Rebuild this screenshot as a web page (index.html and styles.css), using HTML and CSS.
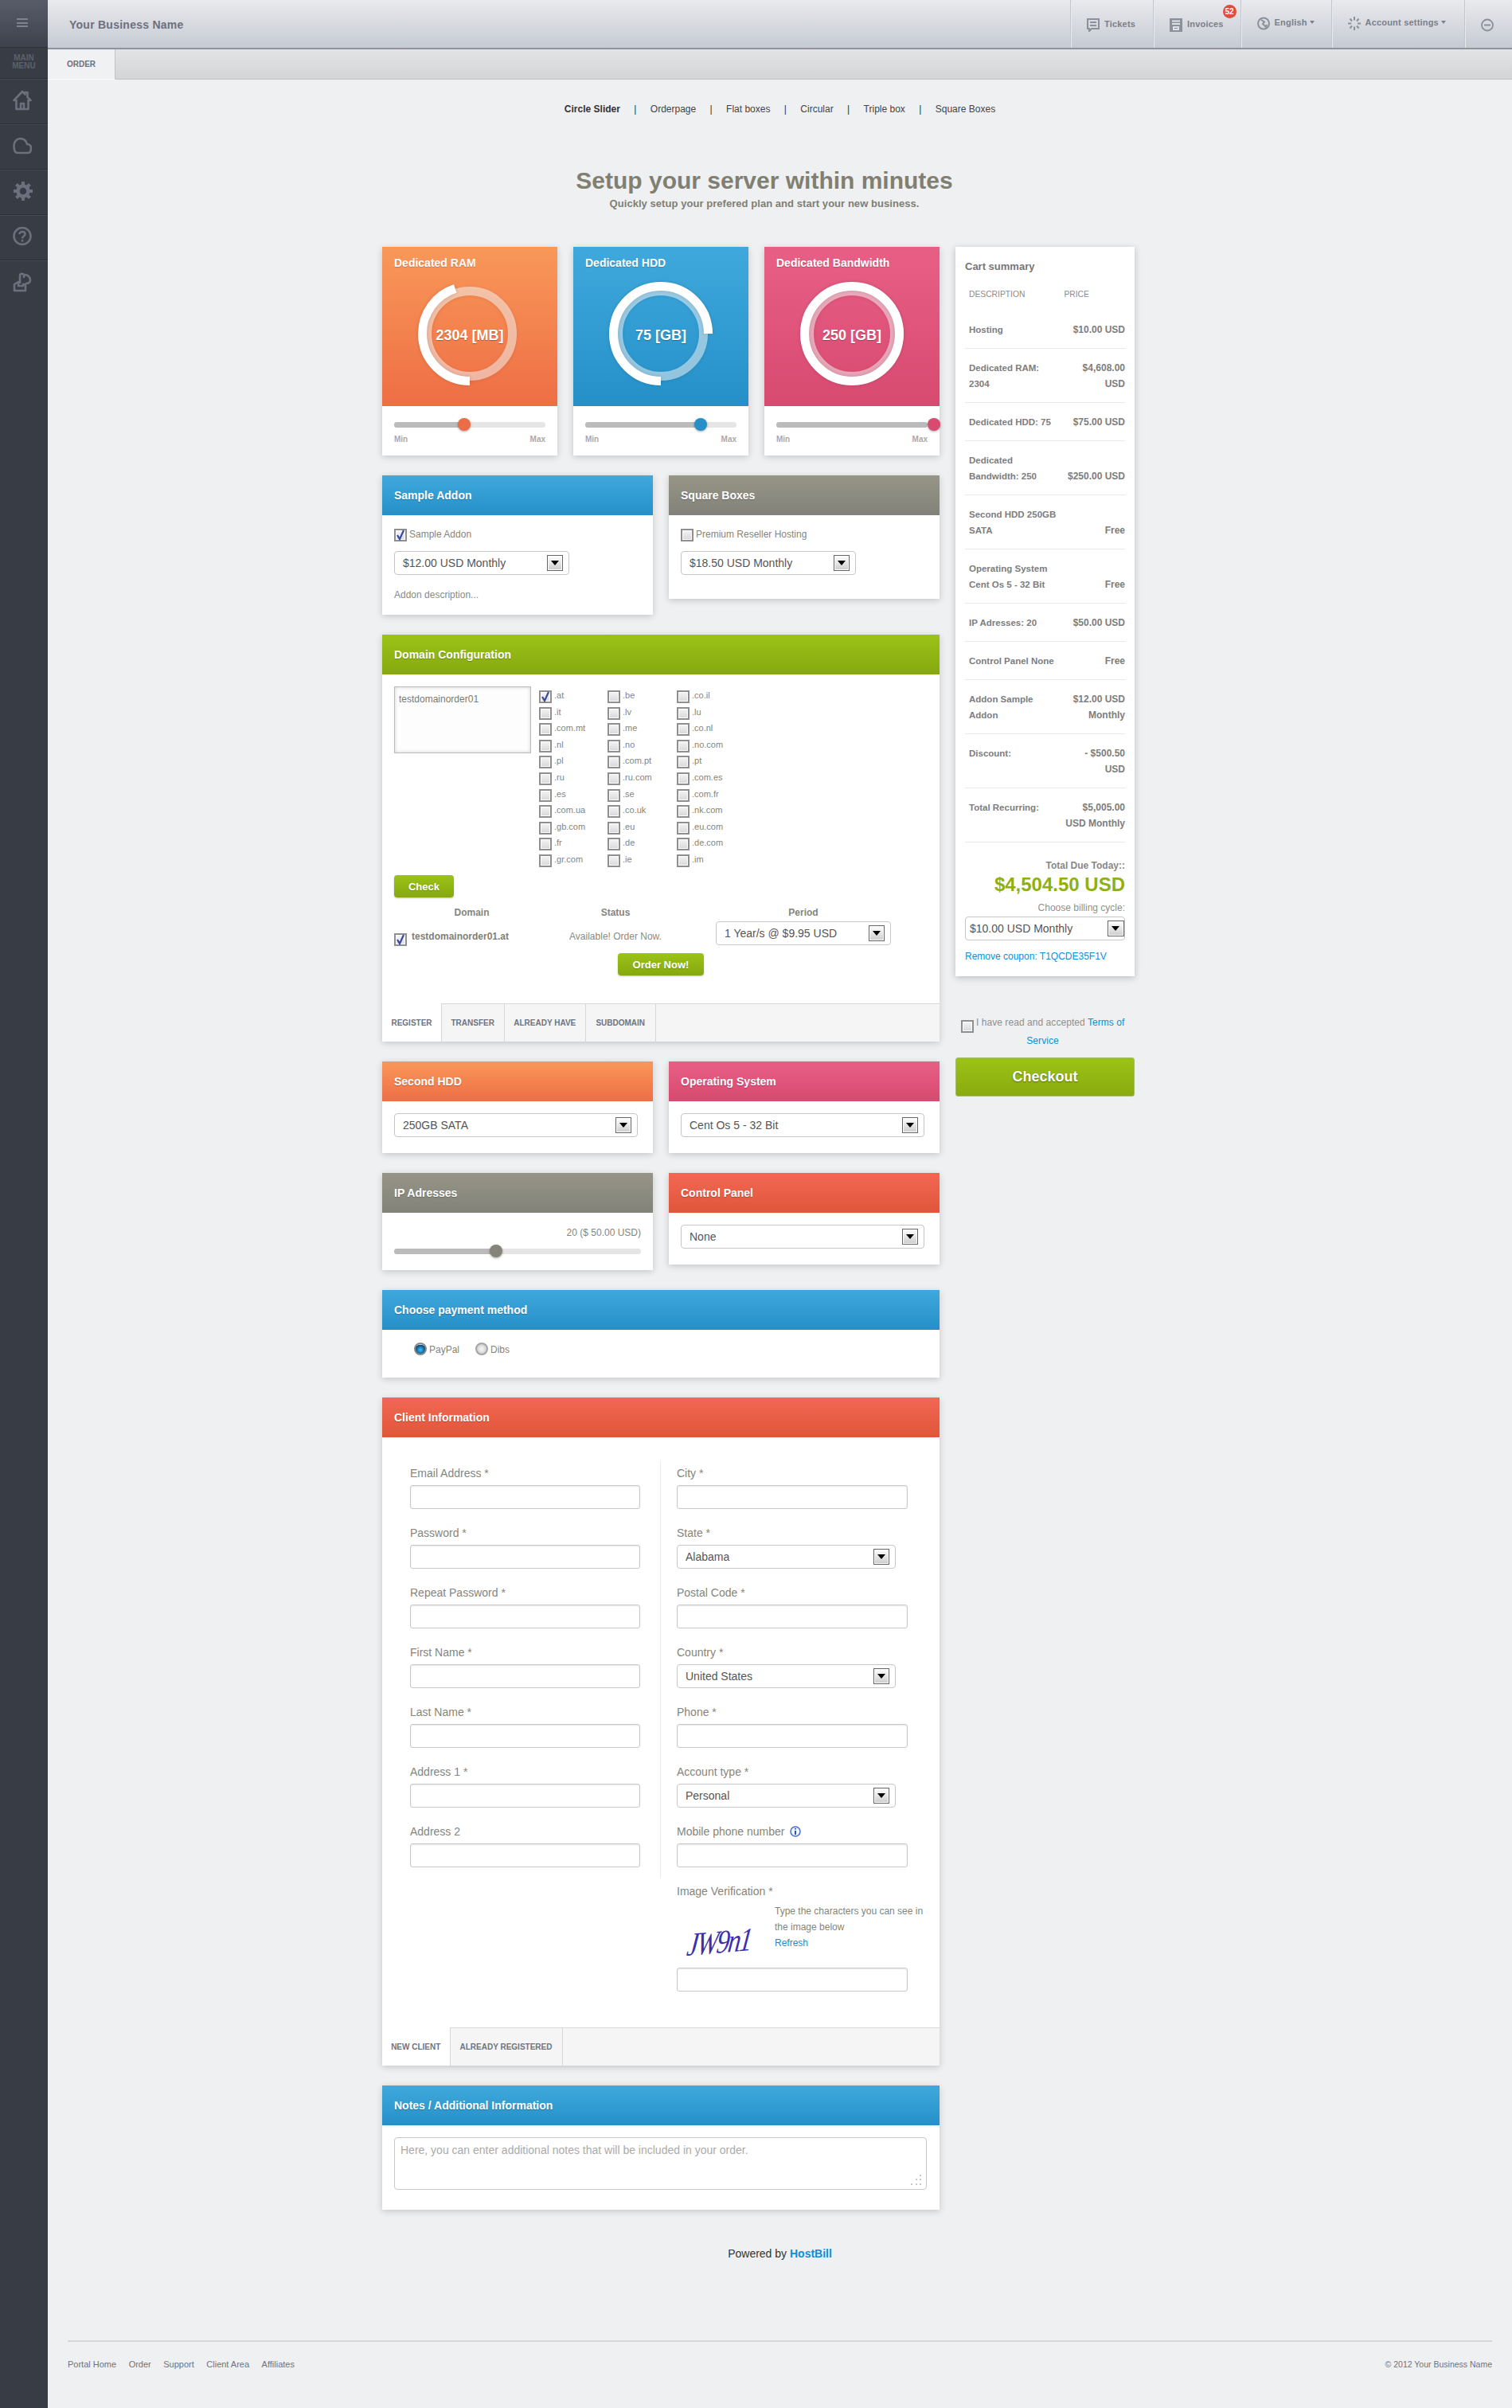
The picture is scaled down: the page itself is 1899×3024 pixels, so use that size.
FILE: index.html
```html
<!DOCTYPE html>
<html lang="en">
<head>
<meta charset="utf-8">
<title>Order</title>
<link rel="stylesheet" href="styles.css">
</head>
<body>
<div class="app">
  <aside class="sidebar">
    <div class="side-top"><span class="burger"></span></div>
    <div class="side-label">MAIN<br>MENU</div>
    <div class="side-item"><svg width="24" height="26" viewBox="0 0 24 26" class="side-icon"><path d="M1.500 13 L12 2 L15.500 5.500 V3 H18.500 V9 L22.500 13 L19.500 13 V24 H4.500 V13 Z M10 24 V17 H14 V24" fill="none" stroke="#6c707c" stroke-width="2.600" stroke-linejoin="round"/></svg></div>
    <div class="side-item"><svg width="24" height="22" viewBox="0 0 24 22" class="side-icon"><path d="M6 20 H19 C22 20 23 17 23 14 C23 11 21 9 18 9 C17 5 14 2 9.500 2 C5 2 1.500 6 1.500 11 C1.500 16 3 20 6 20 Z" fill="none" stroke="#6c707c" stroke-width="2.600"/></svg></div>
    <div class="side-item"><svg width="26" height="26" viewBox="0 0 26 26" class="side-icon"><circle cx="13" cy="13" r="6.500" fill="none" stroke="#6c707c" stroke-width="4.500"/><path d="M13 1 V6 M13 20 V25 M1 13 H6 M20 13 H25 M4.500 4.500 L8 8 M18 18 L21.500 21.500 M21.500 4.500 L18 8 M8 18 L4.500 21.500" stroke="#6c707c" stroke-width="4"/></svg></div>
    <div class="side-item"><svg width="24" height="26" viewBox="0 0 24 26" class="side-icon"><circle cx="12" cy="12.500" r="10.500" fill="none" stroke="#6c707c" stroke-width="2.600"/><path d="M8.500 10 C8.500 6 15.500 6 15.500 10 C15.500 12.500 12 12.500 12 15.500 M12 17 V19.500" fill="none" stroke="#6c707c" stroke-width="2.600"/></svg></div>
    <div class="side-item"><svg width="24" height="26" viewBox="0 0 24 26" class="side-icon"><path d="M9 15 V5 C9 2 14 2 14 5 V8 M15 4 C19 4 22 7 22 11 C22 14 19 15 16 15 M2 24 V16 L7 13 V18 H13 V16 H16 V24 Z" fill="none" stroke="#6c707c" stroke-width="2.600" stroke-linejoin="round"/></svg></div>
  </aside>

  <div class="main">
    <header class="topbar">
      <div class="brand">Your Business Name</div>
      <div class="top-items">
        <div class="top-item w-tickets">
          <svg width="16" height="17" viewBox="0 0 16 17"><path d="M1 1 H15 V13 H6 L3 16 V13 H1 Z M4 5 H12 M4 9 H12" fill="none" stroke="#8b909b" stroke-width="2"/></svg>
          <span>Tickets</span>
        </div>
        <div class="top-item w-invoices">
          <svg width="16" height="17" viewBox="0 0 16 17"><path d="M0 0 H16 V17 H0 Z" fill="#8b909b"/><path d="M3 3.500 H13 M3 7 H13 M5 11 H11 V14 H5 Z" stroke="#dfe1e6" stroke-width="2" fill="none"/></svg>
          <span>Invoices</span>
          <b class="badge">52</b>
        </div>
        <div class="top-item raised w-lang">
          <svg width="16" height="17" viewBox="0 0 16 17"><circle cx="8" cy="8.500" r="7" fill="none" stroke="#8b909b" stroke-width="2"/><path d="M5 4 L9 6.500 L7 9 L11 13 L12 10" fill="none" stroke="#8b909b" stroke-width="2"/></svg>
          <span>English</span><i class="caret"></i>
        </div>
        <div class="top-item raised w-account">
          <svg width="16" height="17" viewBox="0 0 16 17"><path d="M8 0 V4.500 M8 12.500 V17 M0 8.500 H4 M12 8.500 H16 M2.500 2.500 L5 5.500 M13.500 14.500 L11 11.500 M13.500 2.500 L11 5.500 M2.500 14.500 L5 11.500" stroke="#8b909b" stroke-width="2"/></svg>
          <span>Account settings</span><i class="caret"></i>
        </div>
        <div class="top-item w-exit">
          <svg width="16" height="17" viewBox="0 0 16 17"><circle cx="8" cy="8.500" r="7" fill="none" stroke="#8b909b" stroke-width="1.800"/><path d="M4 8.500 H12" stroke="#8b909b" stroke-width="2"/></svg>
        </div>
      </div>
    </header>
    <div class="tabbar"><div class="tabbar-active">ORDER</div></div>

    <nav class="subnav">
      <b>Circle Slider</b><span class="sep">|</span><span>Orderpage</span><span class="sep">|</span><span>Flat boxes</span><span class="sep">|</span><span>Circular</span><span class="sep">|</span><span>Triple box</span><span class="sep">|</span><span>Square Boxes</span>
    </nav>

    <div class="container">
      <h1 class="page-title">Setup your server within minutes</h1>
      <p class="page-sub">Quickly setup your prefered plan and start your new business.</p>

      <div class="layout">
        <div class="col-main">
          <div class="cards">
            <section class="card">
              <div class="card-head orange">
                <h3 class="card-title">Dedicated RAM</h3>
                <div class="ring">
                  <svg width="140" height="140" viewBox="0 0 140 140"><circle class="ring-base" cx="70" cy="70" r="53.500"/><circle class="ring-val" cx="70" cy="70" r="59.500" stroke-dasharray="168 400" transform="rotate(90 70 70)"/></svg>
                  <span class="ring-text">2304 [MB]</span>
                </div>
              </div>
              <div class="card-foot">
                <div class="track"><div class="fill" style="width:44%"></div><span class="thumb t-orange" style="left:80px"></span></div>
                <div class="minmax"><span>Min</span><span>Max</span></div>
              </div>
            </section>
            <section class="card">
              <div class="card-head blue">
                <h3 class="card-title">Dedicated HDD</h3>
                <div class="ring">
                  <svg width="140" height="140" viewBox="0 0 140 140"><circle class="ring-base" cx="70" cy="70" r="53.500"/><circle class="ring-val" cx="70" cy="70" r="59.500" stroke-dasharray="280 400" transform="rotate(90 70 70)"/></svg>
                  <span class="ring-text">75 [GB]</span>
                </div>
              </div>
              <div class="card-foot">
                <div class="track"><div class="fill" style="width:75%"></div><span class="thumb t-blue" style="left:136.500px"></span></div>
                <div class="minmax"><span>Min</span><span>Max</span></div>
              </div>
            </section>
            <section class="card">
              <div class="card-head pink">
                <h3 class="card-title">Dedicated Bandwidth</h3>
                <div class="ring">
                  <svg width="140" height="140" viewBox="0 0 140 140"><circle class="ring-base" cx="70" cy="70" r="53.500"/><circle class="ring-val" cx="70" cy="70" r="59.500" stroke-dasharray="374 400" transform="rotate(90 70 70)"/></svg>
                  <span class="ring-text">250 [GB]</span>
                </div>
              </div>
              <div class="card-foot">
                <div class="track"><div class="fill" style="width:100%"></div><span class="thumb t-pink" style="left:190px"></span></div>
                <div class="minmax"><span>Min</span><span>Max</span></div>
              </div>
            </section>
          </div>

          <div class="two">
            <section class="panel">
              <h3 class="panel-head blue">Sample Addon</h3>
              <div class="panel-body addon">
                <label class="check-line"><span class="cb on"><svg width="14" height="14" viewBox="0 0 14 14"><path d="M3 7 L6 12 L11 1" fill="none" stroke="#3a4a9a" stroke-width="2.200"/></svg></span>Sample Addon</label>
                <div class="select s220"><span>$12.00 USD Monthly</span><i class="arrow"></i></div>
                <p class="addon-desc">Addon description...</p>
              </div>
            </section>
            <section class="panel">
              <h3 class="panel-head grey">Square Boxes</h3>
              <div class="panel-body addon">
                <label class="check-line"><span class="cb"></span>Premium Reseller Hosting</label>
                <div class="select s220"><span>$18.50 USD Monthly</span><i class="arrow"></i></div>
              </div>
            </section>
          </div>

          <section class="panel">
            <h3 class="panel-head green">Domain Configuration</h3>
            <div class="domain-body">
              <div class="domain-top">
                <div class="domain-input">testdomainorder01</div>
                <div class="tlds">
                  <label class="tld"><span class="cb on"><svg width="14" height="14" viewBox="0 0 14 14"><path d="M3 7 L6 12 L11 1" fill="none" stroke="#3a4a9a" stroke-width="2.200"/></svg></span>.at</label>
                  <label class="tld"><span class="cb"></span>.be</label><label class="tld"><span class="cb"></span>.co.il</label>
                  <label class="tld"><span class="cb"></span>.it</label><label class="tld"><span class="cb"></span>.lv</label><label class="tld"><span class="cb"></span>.lu</label>
                  <label class="tld"><span class="cb"></span>.com.mt</label><label class="tld"><span class="cb"></span>.me</label><label class="tld"><span class="cb"></span>.co.nl</label>
                  <label class="tld"><span class="cb"></span>.nl</label><label class="tld"><span class="cb"></span>.no</label><label class="tld"><span class="cb"></span>.no.com</label>
                  <label class="tld"><span class="cb"></span>.pl</label><label class="tld"><span class="cb"></span>.com.pt</label><label class="tld"><span class="cb"></span>.pt</label>
                  <label class="tld"><span class="cb"></span>.ru</label><label class="tld"><span class="cb"></span>.ru.com</label><label class="tld"><span class="cb"></span>.com.es</label>
                  <label class="tld"><span class="cb"></span>.es</label><label class="tld"><span class="cb"></span>.se</label><label class="tld"><span class="cb"></span>.com.fr</label>
                  <label class="tld"><span class="cb"></span>.com.ua</label><label class="tld"><span class="cb"></span>.co.uk</label><label class="tld"><span class="cb"></span>.nk.com</label>
                  <label class="tld"><span class="cb"></span>.gb.com</label><label class="tld"><span class="cb"></span>.eu</label><label class="tld"><span class="cb"></span>.eu.com</label>
                  <label class="tld"><span class="cb"></span>.fr</label><label class="tld"><span class="cb"></span>.de</label><label class="tld"><span class="cb"></span>.de.com</label>
                  <label class="tld"><span class="cb"></span>.gr.com</label><label class="tld"><span class="cb"></span>.ie</label><label class="tld"><span class="cb"></span>.im</label>
                </div>
              </div>
              <button class="btn btn-check" type="button">Check</button>
              <div class="result-grid">
                <div class="rh">Domain</div><div class="rh">Status</div><div class="rh">Period</div>
                <div class="rc-name"><span class="cb on"><svg width="14" height="14" viewBox="0 0 14 14"><path d="M3 7 L6 12 L11 1" fill="none" stroke="#3a4a9a" stroke-width="2.200"/></svg></span><b>testdomainorder01.at</b></div>
                <div class="rc-status">Available! Order Now.</div>
                <div class="rc-select"><div class="select s220"><span>1 Year/s @ $9.95 USD</span><i class="arrow"></i></div></div>
              </div>
              <div class="order-now"><button class="btn btn-order" type="button">Order Now!</button></div>
            </div>
            <div class="tabs">
              <div class="tab active w75">REGISTER</div><div class="tab w78">TRANSFER</div><div class="tab w102">ALREADY HAVE</div><div class="tab w87">SUBDOMAIN</div>
            </div>
          </section>

          <div class="two">
            <section class="panel">
              <h3 class="panel-head orange">Second HDD</h3>
              <div class="panel-body opt"><div class="select s306"><span>250GB SATA</span><i class="arrow"></i></div></div>
            </section>
            <section class="panel">
              <h3 class="panel-head pink">Operating System</h3>
              <div class="panel-body opt"><div class="select s306"><span>Cent Os 5 - 32 Bit</span><i class="arrow"></i></div></div>
            </section>
          </div>

          <div class="two">
            <section class="panel">
              <h3 class="panel-head grey">IP Adresses</h3>
              <div class="panel-body ip">
                <div class="ip-val">20 ($ 50.00 USD)</div>
                <div class="track"><div class="fill" style="width:41%"></div><span class="thumb t-grey" style="left:120px"></span></div>
              </div>
            </section>
            <section class="panel">
              <h3 class="panel-head red">Control Panel</h3>
              <div class="panel-body opt"><div class="select s306"><span>None</span><i class="arrow"></i></div></div>
            </section>
          </div>

          <section class="panel">
            <h3 class="panel-head blue">Choose payment method</h3>
            <div class="pay-body">
              <label class="pay"><span class="radio on"></span>PayPal</label>
              <label class="pay"><span class="radio"></span>Dibs</label>
            </div>
          </section>

          <section class="panel">
            <h3 class="panel-head red">Client Information</h3>
            <div class="form-grid">
              <div class="form-left">
                <div class="field"><label>Email Address *</label><input type="text"></div>
                <div class="field"><label>Password *</label><input type="text"></div>
                <div class="field"><label>Repeat Password *</label><input type="text"></div>
                <div class="field"><label>First Name *</label><input type="text"></div>
                <div class="field"><label>Last Name *</label><input type="text"></div>
                <div class="field"><label>Address 1 *</label><input type="text"></div>
                <div class="field"><label>Address 2</label><input type="text"></div>
              </div>
              <div class="form-right">
                <div class="field"><label>City *</label><input type="text"></div>
                <div class="field"><label>State *</label><div class="select s275"><span>Alabama</span><i class="arrow"></i></div></div>
                <div class="field"><label>Postal Code *</label><input type="text"></div>
                <div class="field"><label>Country *</label><div class="select s275"><span>United States</span><i class="arrow"></i></div></div>
                <div class="field"><label>Phone *</label><input type="text"></div>
                <div class="field"><label>Account type *</label><div class="select s275"><span>Personal</span><i class="arrow"></i></div></div>
                <div class="field"><label>Mobile phone number <svg class="info" width="14" height="16" viewBox="0 0 14 16"><circle cx="7" cy="8" r="6" fill="#eef3fc" stroke="#3f6fd8" stroke-width="1.500"/><path d="M7 4 V5.500 M7 7 V12" stroke="#2a52b8" stroke-width="2"/></svg></label><input type="text"></div>
                <div class="field verify">
                  <label>Image Verification *</label>
                  <div class="captcha-row">
                    <div class="captcha"><span>JW9n1</span></div>
                    <div class="captcha-help">Type the characters you can see in<br>the image below<br><a>Refresh</a></div>
                  </div>
                  <input type="text">
                </div>
              </div>
            </div>
            <div class="tabs form-tabs">
              <div class="tab active w85">NEW CLIENT</div><div class="tab w141">ALREADY REGISTERED</div>
            </div>
          </section>

          <section class="panel">
            <h3 class="panel-head blue">Notes / Additional Information</h3>
            <div class="notes-body">
              <div class="notes-wrap">
                <textarea class="notes" placeholder="Here, you can enter additional notes that will be included in your order."></textarea>
                <svg class="grip" width="14" height="14" viewBox="0 0 14 14"><path d="M12 1 h2 v2 h-2 Z M7 6 h2 v2 h-2 Z M12 6 h2 v2 h-2 Z M1 12 h2 v2 h-2 Z M7 12 h2 v2 h-2 Z M12 12 h2 v2 h-2 Z" fill="#c8c8c8"/></svg>
              </div>
            </div>
          </section>
        </div>

        <div class="col-cart">
          <section class="cart">
            <h3 class="cart-title">Cart summary</h3>
            <div class="cart-cols"><span>DESCRIPTION</span><span>PRICE</span></div>
            <div class="row"><span>Hosting</span><span>$10.00 USD</span></div>
            <div class="row"><span>Dedicated RAM:<br>2304</span><span class="r">$4,608.00<br>USD</span></div>
            <div class="row"><span>Dedicated HDD: 75</span><span>$75.00 USD</span></div>
            <div class="row"><span>Dedicated<br>Bandwidth: 250</span><span>$250.00 USD</span></div>
            <div class="row"><span>Second HDD 250GB<br>SATA</span><span>Free</span></div>
            <div class="row"><span>Operating System<br>Cent Os 5 - 32 Bit</span><span>Free</span></div>
            <div class="row"><span>IP Adresses: 20</span><span>$50.00 USD</span></div>
            <div class="row"><span>Control Panel None</span><span>Free</span></div>
            <div class="row"><span>Addon Sample<br>Addon</span><span class="r">$12.00 USD<br>Monthly</span></div>
            <div class="row top"><span>Discount:</span><span class="r">- $500.50<br>USD</span></div>
            <div class="row top"><span>Total Recurring:</span><span class="r">$5,005.00<br>USD Monthly</span></div>
            <div class="due-label">Total Due Today::</div>
            <div class="due">$4,504.50 USD</div>
            <div class="cycle-label">Choose billing cycle:</div>
            <div class="select tight"><span>$10.00 USD Monthly</span><i class="arrow"></i></div>
            <a class="coupon">Remove coupon: T1QCDE35F1V</a>
          </section>
          <p class="terms"><span class="cb"></span> I have read and accepted <a>Terms of<br>Service</a></p>
          <button class="checkout" type="button">Checkout</button>
        </div>
      </div>
    </div>

    <p class="powered">Powered by <a>HostBill</a></p>

    <footer class="footer">
      <div class="foot-links"><span>Portal Home</span><span>Order</span><span>Support</span><span>Client Area</span><span>Affiliates</span></div>
      <div class="foot-copy">© 2012 Your Business Name</div>
    </footer>
  </div>
</div>
</body>
</html>
```

FILE: styles.css
```css
* { box-sizing: border-box; }
html, body { margin: 0; padding: 0; }
body { background: #eff0f2; font-family: "Liberation Sans", Arial, sans-serif; font-size: 12px; color: #7f7f75; }
h1, h3, p { margin: 0; }
a { color: #0a8fd6; }

.app { display: flex; min-height: 100vh; }

/* sidebar */
.sidebar { width: 60px; flex: none; background: #383c45; }
.side-top { height: 60px; background: linear-gradient(#575c69, #3e424c); border-bottom: 1px solid #2f323a; display: flex; justify-content: flex-start; padding: 23px 0 0 21px; }
.burger { display: block; width: 14px; height: 11px; border-top: 2px solid #7e8390; border-bottom: 2px solid #7e8390; position: relative; }
.burger::after { content: ""; position: absolute; left: 0; right: 0; top: 2.500px; height: 2px; background: #7e8390; }
.side-label { height: 38px; padding-top: 8px; text-align: center; font-size: 10px; line-height: 10px; font-weight: bold; color: #5c616d; }
.side-item { height: 57px; border-top: 1px solid #2c2f36; box-shadow: inset 0 1px 0 #454954; display: flex; align-items: center; padding: 0 0 3px 16px; }

/* top bar */
.main { flex: 1; min-width: 0; display: flex; flex-direction: column; }
.topbar { height: 62px; display: flex; justify-content: space-between; background: linear-gradient(#e9eaed, #c6cad3); border-bottom: 2px solid #8f939c; }
.brand { padding: 23px 0 0 27px; font-size: 14px; line-height: 16px; font-weight: bold; color: #6c707d; letter-spacing: .25px; }
.top-items { display: flex; }
.top-item { position: relative; height: 60px; border-left: 1px solid #c3c6cd; box-shadow: inset 1px 0 0 #e8e9ec; display: flex; align-items: flex-start; gap: 6px; padding: 23px 0 0 20px; font-size: 11px; line-height: 14px; font-weight: bold; color: #7a7f8b; }
.top-item span { letter-spacing: .2px; }
.raised { padding-top: 21px; }
.w-tickets { width: 104px; }
.w-invoices { width: 109.500px; }
.w-lang { width: 114px; }
.w-account { width: 167.500px; }
.w-exit { width: 60px; padding-left: 20px; }
.badge { position: absolute; left: 86.500px; top: 6px; width: 17px; height: 17px; border-radius: 50%; background: #e74a3b; color: #fff; font-size: 10px; line-height: 17px; text-align: center; }
.caret { width: 0; height: 0; margin: 5px 0 0 -3px; border: 3.500px solid transparent; border-top: 4px solid #7a7f8b; border-bottom: 0; }

.tabbar { height: 38px; background: linear-gradient(#e3e4e6, #d3d4d6); border-bottom: 1px solid #c2c3c6; }
.tabbar-active { width: 85px; height: 38px; background: #f0f1f3; border-right: 1px solid #c2c3c6; border-bottom: 1px solid #fff; font-size: 10px; line-height: 37px; font-weight: bold; color: #6c707d; text-align: center; }

.subnav { margin-top: 30px; height: 14px; display: flex; justify-content: center; gap: 17.400px; font-size: 12px; line-height: 14px; color: #444; }
.subnav b { color: #333; }
.sep { color: #333; }

.container { margin-left: 420px; width: 960px; }
.page-title { margin-top: 65px; font-size: 30px; line-height: 36px; font-weight: bold; text-align: center; color: #7f7f72; }
.page-sub { margin-top: 3px; font-size: 13px; line-height: 16px; font-weight: bold; letter-spacing: .05px; text-align: center; color: #7f7f72; }

.layout { margin-top: 46px; display: flex; gap: 20px; align-items: flex-start; }
.col-main { width: 700px; display: flex; flex-direction: column; gap: 25px; }
.col-cart { width: 225px; }

/* colour heads */
.orange { background: linear-gradient(#f99859, #ee6e45); }
.blue { background: linear-gradient(#3fa9dd, #2590c8); }
.pink { background: linear-gradient(#e85f86, #d84a70); }
.grey { background: linear-gradient(#969586, #83827a); }
.green { background: linear-gradient(#9bc317, #86a80f); }
.red { background: linear-gradient(#f26753, #e0563a); }

/* slider cards */
.cards { display: flex; gap: 20px; }
.card { width: 220px; height: 262px; background: #fff; box-shadow: 0 2px 8px rgba(0, 0, 0, .18); }
.card-head { height: 200px; padding-top: 12px; }
.card-title { padding-left: 15px; font-size: 14px; line-height: 16px; font-weight: bold; color: #fff; text-shadow: 0 1px 1px rgba(0, 0, 0, .2); }
.ring { position: relative; width: 140px; height: 140px; margin: 11px auto 0; }
.ring svg { display: block; overflow: visible; }
.ring-base { fill: none; stroke: rgba(255, 255, 255, .5); stroke-width: 11; filter: drop-shadow(0 1px 2px rgba(0, 0, 0, .15)); }
.ring-val { fill: none; stroke: #fff; stroke-width: 11; filter: drop-shadow(0 0 2px rgba(0, 0, 0, .15)); }
.ring-text { position: absolute; left: 0; right: 0; top: 61px; text-align: center; font-size: 18px; line-height: 22px; font-weight: bold; color: #fff; text-shadow: 0 1px 1px rgba(0, 0, 0, .3); }
.card-foot { padding: 20px 15px 0; }
.track { position: relative; height: 7px; border-radius: 4px; background: #e5e5e5; }
.fill { height: 7px; border-radius: 4px; background: #bbb; }
.thumb { position: absolute; top: -5px; width: 16px; height: 16px; border-radius: 50%; box-shadow: 0 1px 3px rgba(0, 0, 0, .35); }
.t-orange { background: #ec6d45; }
.t-blue { background: #2590c8; }
.t-pink { background: #d84a70; }
.t-grey { background: #85847a; }
.minmax { margin-top: 9px; display: flex; justify-content: space-between; font-size: 10px; line-height: 12px; font-weight: bold; color: #aaa; }

/* panels */
.two { display: grid; grid-template-columns: 340px 340px; gap: 20px; align-items: start; }
.panel { background: #fff; box-shadow: 0 2px 8px rgba(0, 0, 0, .18); }
.panel-head { height: 50px; padding-left: 15px; font-size: 14px; line-height: 50px; font-weight: bold; color: #fff; text-shadow: 0 1px 1px rgba(0, 0, 0, .25); }
.panel-body { padding: 15px; }
.addon { padding: 17px 15px 30px; }
.addon-desc { margin-top: 17px; margin-bottom: -13px; line-height: 16px; color: #8a8a80; }
.check-line { display: flex; gap: 3px; height: 16px; line-height: 15px; margin-bottom: 12px; color: #85857b; }
.opt { padding: 15px 15px 20px; }
.ip { padding: 17px 15px 20px; }
.ip-val { text-align: right; line-height: 16px; margin-bottom: 12px; color: #85857b; }

/* custom controls */
.cb { flex: none; display: inline-block; width: 16px; height: 16px; border: 2px solid #8f8f8f; outline: 1px solid #fff; outline-offset: -3px; background: linear-gradient(#f4f4f4, #d8d8d8); position: relative; vertical-align: top; }
.cb.on { background: linear-gradient(#f6f6ff, #dcdce8); }
.cb svg { position: absolute; left: -1px; top: -1px; }
.radio { flex: none; display: inline-block; width: 16px; height: 16px; border-radius: 50%; border: 2px solid #a5a5a5; background: radial-gradient(circle, #f0f0f0 20%, #c4c4c4 90%); }
.radio.on { border-color: #888; background: radial-gradient(circle at 50% 60%, #3ab0e6 10%, #0b5f95 55%, #0a3f66 70%, #eee 72%); }
.select { height: 30px; display: flex; align-items: center; justify-content: space-between; padding: 0 7px 0 10px; border: 1px solid #c6c6c6; border-radius: 4px; background: #fff; font-size: 14px; color: #555; }
.s220 { width: 220px; }
.s275 { width: 275px; }
.s306 { width: 306px; }
.arrow { position: relative; flex: none; width: 20px; height: 20px; border: 1px solid #666; box-shadow: inset 0 0 0 1px #fff; background: linear-gradient(#fafafa 10%, #ccc); }
.arrow::after { content: ""; position: absolute; left: 4px; top: 6px; width: 0; height: 0; border: 5px solid transparent; border-top: 6px solid #000; border-bottom: 0; }
.tight { padding: 0 0 0 5px; }
.tight .arrow { width: 21px; }

/* domain */
.domain-body { padding: 15px 15px 0; }
.domain-top { display: flex; gap: 10px; align-items: flex-start; }
.domain-input { width: 172px; height: 84px; padding: 7px 5px; border: 1px solid #bbb; box-shadow: inset 0 0 4px rgba(0, 0, 0, .18); background: #fdfdfd; font-size: 12px; line-height: 16px; color: #7a7a72; }
.tlds { margin-top: 5px; display: grid; grid-template-columns: 86px 87px 100px; grid-auto-rows: 20.600px; }
.tld { display: flex; gap: 3px; font-size: 11px; line-height: 12px; color: #85857b; }
.btn { display: block; border: 0; border-radius: 4px; padding: 0; background: linear-gradient(#9bc317, #86a80f); box-shadow: 0 1px 2px rgba(0, 0, 0, .25); font-family: inherit; font-size: 13px; font-weight: bold; color: #fff; text-shadow: 0 1px 1px rgba(0, 0, 0, .2); }
.btn-check { margin-top: 5.500px; width: 75px; height: 28px; }
.result-grid { margin-top: 12px; display: grid; grid-template-columns: 195px 166px 306px; grid-template-rows: 18px 30px; }
.rh { text-align: center; font-weight: bold; line-height: 14px; color: #85857b; }
.rc-name { display: flex; gap: 6px; padding-top: 11px; line-height: 16px; color: #7f7f75; }
.rc-name .cb { margin-top: 4px; }
.rc-status { padding-top: 11px; text-align: center; line-height: 16px; color: #8a8a80; }
.rc-select { display: flex; justify-content: center; }
.order-now { margin-top: 10px; display: flex; justify-content: center; }
.btn-order { width: 108px; height: 28px; }

.tabs { margin-top: 35px; height: 48px; display: flex; background: #f5f5f5; border-top: 1px solid #d8d8d8; }
.tab { height: 47px; display: flex; align-items: center; justify-content: center; border-right: 1px solid #d8d8d8; font-size: 10px; font-weight: bold; color: #6f7480; }
.tab.active { position: relative; margin-top: -1px; height: 48px; background: #fff; border-right: 1px solid #d8d8d8; font-weight: bold; }
.w75 { width: 75px; }
.w85 { width: 85.500px; }
.w78 { width: 78.500px; }
.w102 { width: 102.500px; }
.w87 { width: 87.500px; }
.w141 { width: 141px; }

/* payment */
.pay-body { height: 60px; padding: 16px 0 0 40px; display: flex; gap: 20px; }
.pay { display: flex; gap: 3px; height: 18px; line-height: 18px; color: #85857b; }

/* client form */
.form-grid { display: flex; align-items: flex-start; padding-top: 30px; }
.form-left { width: 350px; padding: 7px 0 14px 35px; border-right: 1px solid #ececec; }
.form-left .field input { width: 289px; }
.form-right { padding: 7px 0 0 20px; }
.field { margin-bottom: 22px; }
.form-left .field:last-child, .form-right .field:last-child { margin-bottom: 0; }
.field label { display: block; height: 16px; margin-bottom: 7px; font-size: 14px; line-height: 16px; color: #85857b; white-space: nowrap; }
.field input { display: block; width: 290px; height: 30px; padding: 0 8px; border: 1px solid #c8c8c8; border-radius: 3px; box-shadow: inset 0 1px 2px rgba(0, 0, 0, .1); background: #fff; }
.info { vertical-align: top; margin-left: 3px; }
.captcha-row { display: flex; height: 81px; }
.captcha { width: 123px; padding: 29px 0 0 14px; overflow: hidden; }
.captcha span { display: block; font-family: "Liberation Serif", serif; font-style: italic; font-size: 32px; line-height: 36px; letter-spacing: -2px; color: #3a2fae; transform: skewX(-12deg) rotate(-5deg) scale(1, 1.300); }
.captcha-help { font-size: 12px; line-height: 20px; color: #85857b; white-space: nowrap; }
.verify label { margin-bottom: 7px; }
.form-tabs { margin-top: 45px; }

/* notes */
.notes-body { padding: 15px 15px 25px; }
.notes-wrap { position: relative; width: 669px; height: 66px; }
.notes { display: block; width: 669px; height: 66px; padding: 7px; border: 1px solid #c8c8c8; border-radius: 4px; background: #fff; font-family: inherit; font-size: 14px; line-height: 16px; resize: none; }
.notes::placeholder { color: #aaa; }
.grip { position: absolute; right: 7px; bottom: 6px; }

/* cart */
.cart { padding: 17px 12px 17px; background: #fff; box-shadow: 0 2px 8px rgba(0, 0, 0, .22); }
.cart-title { font-size: 13px; line-height: 16px; font-weight: bold; color: #777; }
.cart-cols { margin-top: 20px; margin-bottom: 12.500px; height: 14px; padding-left: 5px; display: flex; gap: 49px; font-size: 10.300px; line-height: 14px; color: #8b8b8b; }
.row { display: flex; justify-content: space-between; align-items: flex-end; padding: 14px 0 13px 5px; border-bottom: 1px solid #e8e8e8; font-size: 11.500px; line-height: 20px; font-weight: bold; color: #7d7d7d; }
.row.top { align-items: flex-start; }
.row span:last-child { font-size: 12px; white-space: nowrap; }
.r { text-align: right; }
.due-label { margin-top: 21px; text-align: right; font-weight: bold; line-height: 16px; color: #888; }
.due { margin-top: 1px; text-align: right; font-size: 24px; line-height: 30px; font-weight: bold; color: #8fb011; }
.cycle-label { margin-top: 7px; margin-bottom: 4px; text-align: right; line-height: 14px; color: #8f8f8f; }
.coupon { display: block; margin-top: 12.500px; font-size: 12px; line-height: 16px; }
.terms { margin-top: 48px; padding: 0 6px 0 0; text-align: center; font-size: 12px; line-height: 21px; letter-spacing: .06px; color: #8f8f8f; white-space: nowrap; }
.terms .cb { margin: 7px 0 0 0; }
.checkout { display: block; width: 225px; height: 49px; margin-top: 10px; padding: 0; border: 1px solid #a4b96a; border-radius: 3px; background: linear-gradient(#9bc317, #8aab0f); font-family: inherit; font-size: 18px; font-weight: bold; color: #fff; text-shadow: 0 1px 2px rgba(0, 0, 0, .4); }

.powered { margin-top: 47px; text-align: center; font-size: 14px; line-height: 16px; color: #333; }
.powered a { font-weight: bold; }

.footer { margin: 101px 25px 0; padding-top: 21px; border-top: 2px solid #d5d6da; display: flex; justify-content: space-between; font-size: 11px; line-height: 14px; color: #6f7280; }
.foot-links { display: flex; gap: 15.500px; }
.foot-copy { font-size: 10.500px; }
```
